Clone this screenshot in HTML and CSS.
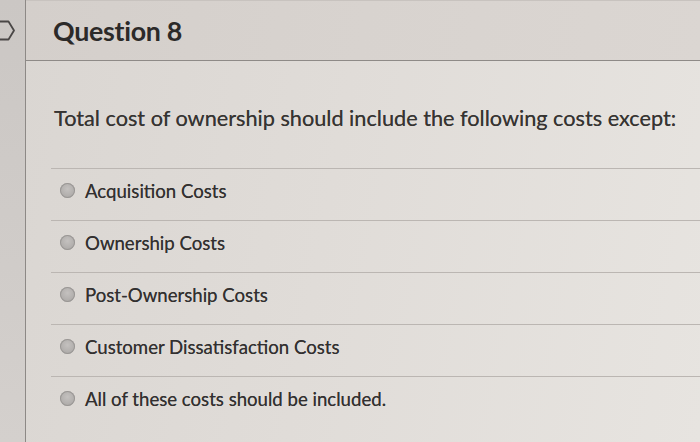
FILE: index.html
```
<!DOCTYPE html>
<html lang="en">
<head>
<meta charset="utf-8">
<title>Question 8</title>
<link rel="stylesheet" href="styles.css">
</head>
<body>
<div class="screen">
  <aside class="sidebar">
    <svg class="nav-icon" width="26" height="24" viewBox="0 0 26 24" aria-hidden="true">
      <polyline points="-4,2.5 8.5,2.5 14,11.5 8.5,20.5 -4,20.5" fill="none" stroke="#4a4746" stroke-width="1.8" stroke-linejoin="round"/>
    </svg>
  </aside>
  <main class="card">
    <header class="card-header">
      <h1 class="title">Question 8</h1>
    </header>
    <section class="card-body">
      <p class="question">Total cost of ownership should include the following costs except:</p>
      <ul class="options">
        <li class="option"><span class="radio"></span><span class="label">Acquisition Costs</span></li>
        <li class="option"><span class="radio"></span><span class="label">Ownership Costs</span></li>
        <li class="option"><span class="radio"></span><span class="label">Post-Ownership Costs</span></li>
        <li class="option"><span class="radio"></span><span class="label">Customer Dissatisfaction Costs</span></li>
        <li class="option"><span class="radio"></span><span class="label">All of these costs should be included.</span></li>
      </ul>
    </section>
  </main>
</div>
</body>
</html>
```
FILE: styles.css
```
html, body {
  margin: 0;
  padding: 0;
  height: 100%;
}
body {
  font-family: Lato, "Open Sans", "Liberation Sans", sans-serif;
  color: #353331;
  background: #cfcbc8;
  overflow: hidden;
}
.screen {
  display: flex;
  width: 700px;
  height: 442px;
}
.sidebar {
  width: 26px;
  flex: none;
  background: linear-gradient(180deg, #cbc7c4 0%, #d0ccc9 60%, #d4d0cd 100%);
  border-right: 1px solid #8d8986;
  padding-top: 19px;
  box-sizing: border-box;
}
.nav-icon {
  display: block;
}
.card {
  flex: 1;
  display: flex;
  flex-direction: column;
  background: linear-gradient(100deg, #dad6d2 0%, #e0dcd8 45%, #e7e4e0 100%);
}
.card-header {
  height: 61px;
  flex: none;
  display: flex;
  align-items: center;
  padding-left: 27px;
  border-top: 1px solid #c8c3bf;
  border-bottom: 1px solid #8e8a87;
  background: linear-gradient(100deg, #d4cfcb 0%, #d8d3cf 50%, #dbd6d2 100%);
  box-sizing: border-box;
}
.title {
  margin: 0;
  font-size: 26.8px;
  font-weight: 700;
  color: #2c2a29;
  letter-spacing: -0.3px;
}
.card-body {
  flex: 1;
  display: flex;
  flex-direction: column;
}
.question {
  margin: 0;
  height: 107px;
  display: flex;
  align-items: center;
  padding-left: 28px;
  font-size: 21.7px;
  color: #363432;
  box-sizing: border-box;
  padding-top: 6px;
  text-shadow: 0 0 0.6px rgba(40, 38, 36, 0.7);
}
.options {
  list-style: none;
  margin: 0 0 0 25px;
  padding: 0;
}
.option {
  height: 52px;
  display: flex;
  align-items: center;
  gap: 10px;
  padding-left: 9px;
  padding-bottom: 8px;
  border-top: 1px solid #bbb6b2;
  box-sizing: border-box;
  font-size: 18.6px;
  color: #323030;
  text-shadow: 0 0 0.6px rgba(40, 38, 36, 0.7);
}
.radio {
  width: 15px;
  height: 15px;
  border-radius: 50%;
  flex: none;
  background: radial-gradient(circle at 50% 40%, #c4c1bf 0%, #b3b0ae 55%, #a09d9b 100%);
  box-shadow: inset 0 0 0 1px #9a9795;
}
.label {
  white-space: nowrap;
}
```
